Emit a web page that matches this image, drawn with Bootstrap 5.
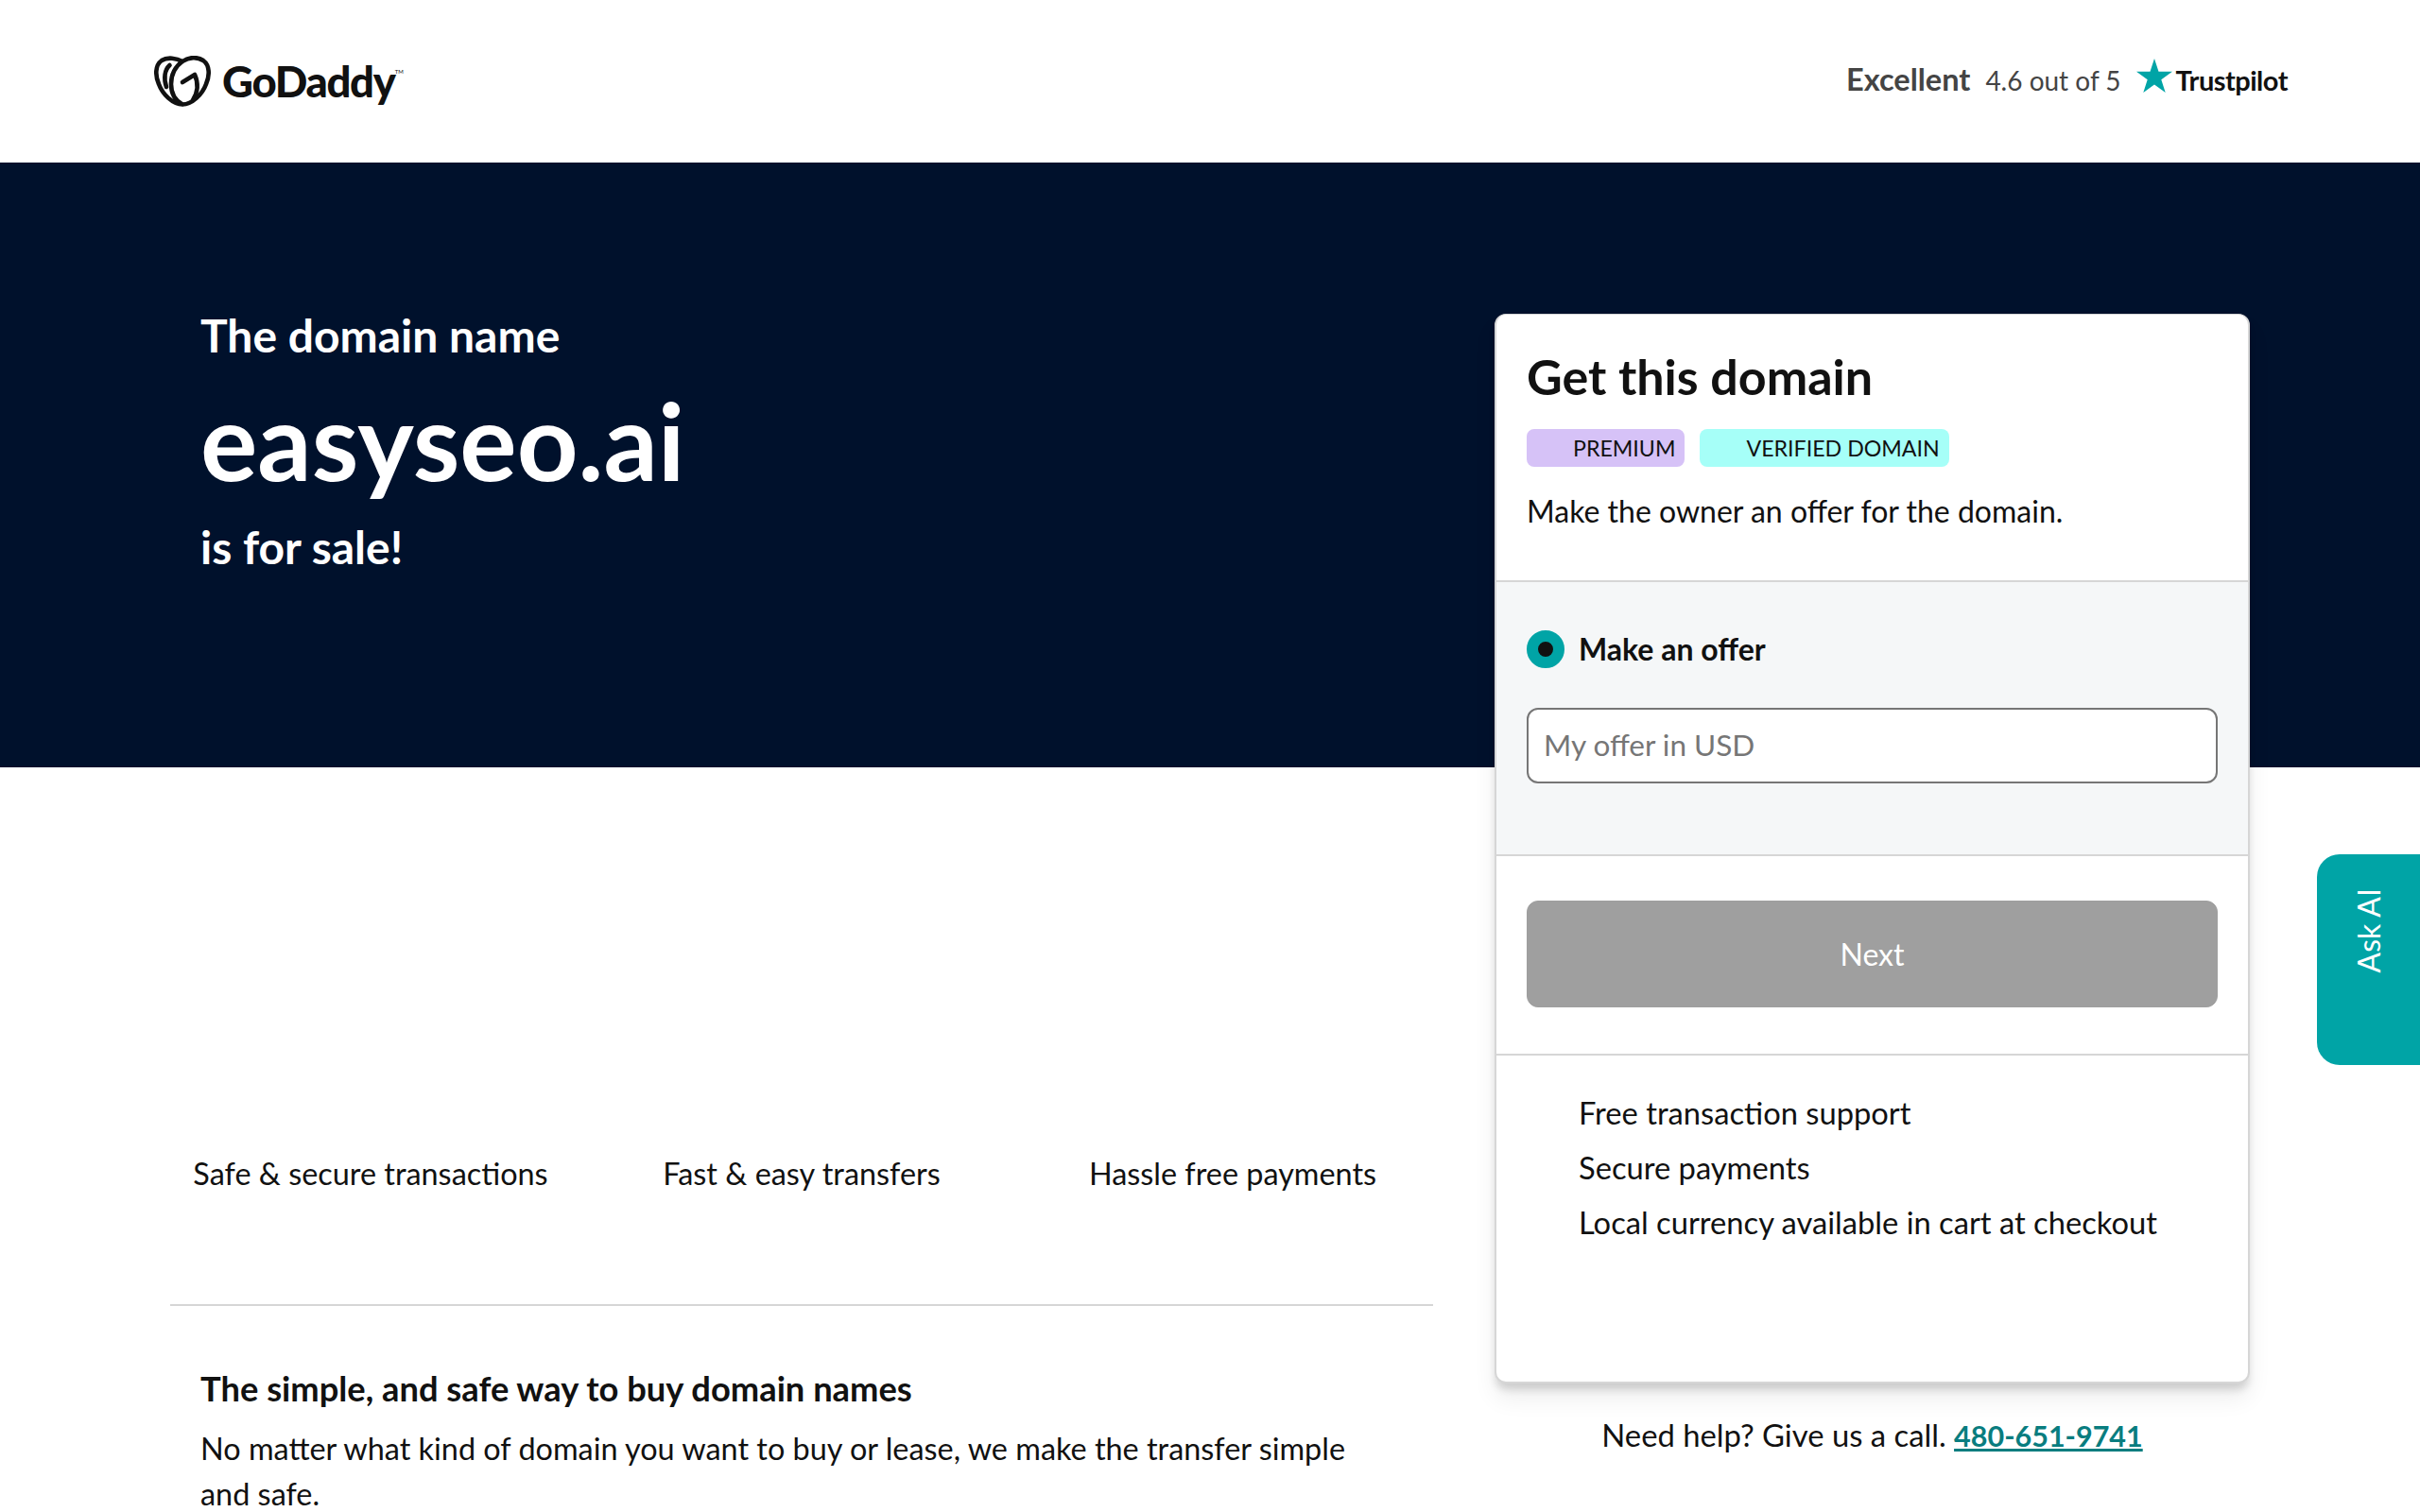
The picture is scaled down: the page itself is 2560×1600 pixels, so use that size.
<!DOCTYPE html>
<html lang="en">
<head>
  <meta charset="UTF-8">
  <meta name="viewport" content="width=device-width, initial-scale=1.0">
  <title>easyseo.ai</title>
  <link href="https://cdn.jsdelivr.net/npm/bootstrap@5.3.2/dist/css/bootstrap.min.css" rel="stylesheet">
  <style>
    body {
      font-family: "Lato", "Liberation Sans", sans-serif;
      font-size: 32px;
      color: #111;
      overflow: hidden;
      height: 1600px;
    }
    .site-header {
      height: 172px;
      padding: 0 140px 0 163px;
    }
    .logo-text {
      font-size: 45.5px;
      font-weight: 900;
      letter-spacing: -1.3px;
      margin-left: 12px;
      line-height: 1;
    }
    .logo-tm {
      font-size: 6px;
      align-self: flex-start;
      margin-top: 12px;
    }
    .rating {
      color: #444;
      margin-top: -3px;
    }
    .rating-label {
      font-size: 32.5px;
      font-weight: 700;
    }
    .rating-score {
      font-size: 28px;
      margin-left: 16px;
    }
    .rating-star {
      margin: -10px 0 0 16px;
    }
    .rating-brand {
      font-size: 29px;
      font-weight: 700;
      color: #111;
      letter-spacing: -.5px;
      margin-left: 4px;
    }
    .page-main {
      background: linear-gradient(#00112c 640px, #fff 640px);
      padding: 160px 180px 0;
      gap: 65px;
    }
    .left-col {
      width: 1336px;
    }
    .hero-text {
      padding-left: 32px;
      color: #fff;
      height: 1030px;
    }
    .hero-small {
      font-size: 48px;
      font-weight: 700;
      line-height: 46px;
      margin: 0;
    }
    .hero-domain {
      font-size: 113px;
      font-weight: 700;
      line-height: 130px;
      margin: 22px 0 21px;
    }
    .hero-sale {
      line-height: 56px;
    }
    .features {
      margin-top: -144px;
      color: #111;
      padding-bottom: 114px;
      border-bottom: 2px solid #d6d6d6;
    }
    .features > div {
      flex: 0 0 456px;
      width: 456px;
    }
    .features span {
      font-size: 32.4px;
      line-height: 40px;
    }
    .intro {
      padding: 66px 80px 0 32px;
    }
    .intro h2 {
      font-size: 36.3px;
      font-weight: 700;
      margin-bottom: 17px;
    }
    .intro p {
      font-size: 32.4px;
      line-height: 48px;
    }
    .right-col {
      width: 799px;
    }
    .offer-card {
      height: 1132px;
      border: 2px solid #d6d6d6;
      border-top-width: 1px;
      border-radius: 12px;
      box-shadow: 0 8px 8px -2px rgba(17, 17, 17, .16), 0 16px 24px rgba(17, 17, 17, .07);
      overflow: hidden;
    }
    .card-top {
      padding: 33px 32px 0;
      height: 283px;
      border-bottom: 2px solid #d6d6d6;
    }
    .card-top h1 {
      font-size: 52px;
      font-weight: 700;
      line-height: 64px;
      margin-bottom: 24px;
    }
    .tag {
      font-size: 23.2px;
      font-weight: 400;
      line-height: 40px;
      height: 40px;
      padding: 0 10px 0 49px;
      border-radius: 8px;
      color: #111;
    }
    .tag-premium {
      background: #d6c2f7;
    }
    .tag-verified {
      background: #a6fff8;
    }
    .card-top p {
      font-size: 32px;
      margin: 25px 0 0;
      line-height: 44px;
    }
    .offer-box {
      height: 290px;
      padding: 47px 32px 0;
      background: #f5f7f8;
      border-bottom: 2px solid #d6d6d6;
    }
    .radio-dot {
      width: 40px;
      height: 40px;
      border-radius: 50%;
      border: 12px solid #00a4a6;
      background: #111;
    }
    .radio-label {
      font-size: 32px;
      font-weight: 700;
      margin-left: 15px;
    }
    .offer-input {
      height: 80px;
      margin-top: 38px;
      font-size: 31.5px;
      padding: 0 16px 3px;
      border: 2px solid #767676;
      border-radius: 12px;
    }
    .offer-input::placeholder {
      color: #767676;
    }
    .next-box {
      height: 211px;
      padding: 47px 32px 0;
      border-bottom: 2px solid #d6d6d6;
    }
    .next-btn {
      --bs-btn-disabled-bg: #9f9f9f;
      --bs-btn-disabled-border-color: #9f9f9f;
      --bs-btn-disabled-color: #fff;
      --bs-btn-disabled-opacity: 1;
      height: 113px;
      font-size: 32px;
      border-radius: 12px;
    }
    .perks {
      padding: 39px 32px 0 87px;
      font-size: 32.7px;
      line-height: 44px;
    }
    .perks li {
      margin-bottom: 14px;
    }
    .help-line {
      font-size: 32.8px;
      margin-top: 33px;
      line-height: 44px;
    }
    .help-line a {
      color: #097d7f;
      font-size: 30.5px;
      font-weight: 700;
    }
    .ask-ai {
      position: fixed;
      right: 0;
      top: 904px;
      width: 109px;
      height: 223px;
      background: #00a4a6;
      border-radius: 24px 0 0 24px;
      color: #fff;
      padding-top: 36px;
      font-size: 32px;
    }
    .ask-ai span {
      writing-mode: vertical-rl;
      transform: rotate(180deg);
      line-height: 1;
    }
  </style>
</head>
<body>
  <header class="site-header d-flex align-items-center justify-content-between">
    <a href="#" class="d-flex align-items-center text-decoration-none text-reset">
      <svg width="60" height="54" viewBox="0 0 60 54" fill="none" stroke="#111" stroke-width="4.600" stroke-linecap="round" stroke-linejoin="round">
        <path d="M30 6C24 2.500 14 1 8 5C1 10 1 21 5 30C9 41 20 51.500 30 51.500C40 51.500 51 41 55 30C59 21 59 10 52 5C46 1 37 1 30 6C23 11 18 18 18 30C18 38 20 46 30 51.500"/>
        <path d="M16.500 10C11 15 10 24 13 33"/>
        <path d="M30 28L43 20C47 29 46 39 41 47"/>
      </svg>
      <span class="logo-text">GoDaddy</span>
      <span class="logo-tm">TM</span>
    </a>
    <div class="rating d-flex align-items-center">
      <span class="rating-label">Excellent</span>
      <span class="rating-score">4.6 out of 5</span>
      <svg class="rating-star" width="38" height="36" viewBox="0 0 38 36">
        <path fill="#00a4a6" d="M19 0l4.500 13.700H38L26.300 22.200 30.700 36 19 27.400 7.300 36l4.400-13.800L0 13.700h14.500z"/>
      </svg>
      <span class="rating-brand">Trustpilot</span>
    </div>
  </header>

  <main class="page-main d-flex">
    <div class="left-col">
      <section class="hero-text">
        <p class="hero-small">The domain name</p>
        <p class="hero-domain">easyseo.ai</p>
        <p class="hero-small hero-sale">is for sale!</p>
      </section>
      <div class="features d-flex flex-nowrap justify-content-center text-center">
        <div><span>Safe &amp; secure transactions</span></div>
        <div><span>Fast &amp; easy transfers</span></div>
        <div><span>Hassle free payments</span></div>
      </div>
      <section class="intro">
        <h2>The simple, and safe way to buy domain names</h2>
        <p>No matter what kind of domain you want to buy or lease, we make the transfer simple and safe.</p>
      </section>
    </div>

    <div class="right-col">
      <div class="card offer-card">
        <div class="card-top">
          <h1>Get this domain</h1>
          <div class="d-flex gap-3">
            <span class="badge tag tag-premium">PREMIUM</span>
            <span class="badge tag tag-verified">VERIFIED DOMAIN</span>
          </div>
          <p>Make the owner an offer for the domain.</p>
        </div>
        <div class="offer-box">
          <div class="d-flex align-items-center">
            <span class="radio-dot"></span>
            <span class="radio-label">Make an offer</span>
          </div>
          <input type="text" class="form-control offer-input" placeholder="My offer in USD">
        </div>
        <div class="next-box">
          <button type="button" class="btn next-btn w-100" disabled>Next</button>
        </div>
        <ul class="perks list-unstyled mb-0">
          <li>Free transaction support</li>
          <li>Secure payments</li>
          <li>Local currency available in cart at checkout</li>
        </ul>
      </div>
      <p class="help-line text-center">Need help? Give us a call. <a href="#">480-651-9741</a></p>
    </div>
  </main>

  <aside class="ask-ai d-flex justify-content-center align-items-start">
    <span>Ask AI</span>
  </aside>

  <script src="https://cdn.jsdelivr.net/npm/bootstrap@5.3.2/dist/js/bootstrap.bundle.min.js"></script>
</body>
</html>
